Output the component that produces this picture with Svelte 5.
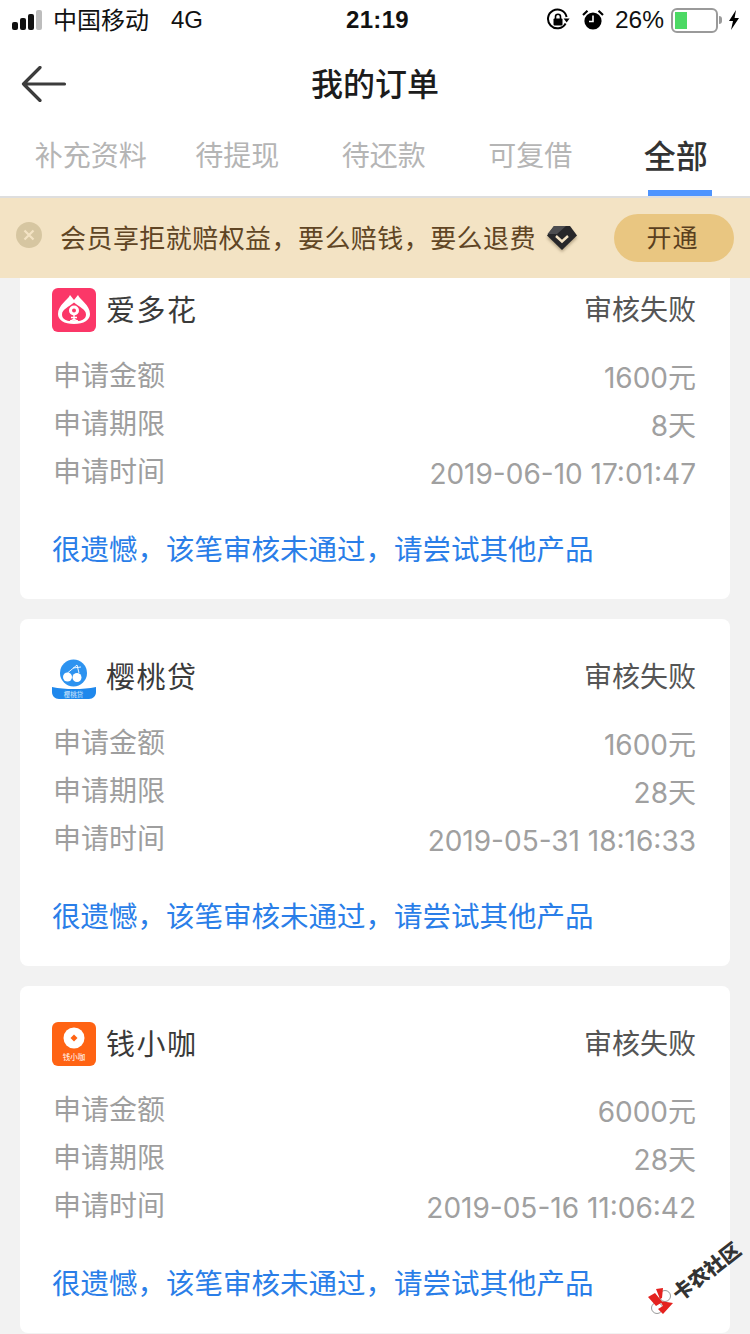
<script>
  const tabs = ['补充资料', '待提现', '待还款', '可复借', '全部'];
  const orders = [
    { name: '爱多花', logo: 'flower', amount: '1600元', term: '8天', time: '2019-06-10 17:01:47' },
    { name: '樱桃贷', logo: 'cherry', amount: '1600元', term: '28天', time: '2019-05-31 18:16:33' },
    { name: '钱小咖', logo: 'coin', amount: '6000元', term: '28天', time: '2019-05-16 11:06:42' }
  ];
</script>

<div class="page">
  <header class="status">
    <div class="s-left">
      <span class="signal"><i class="b1"></i><i class="b2"></i><i class="b3"></i><i class="b4"></i></span>
      <span class="carrier">中国移动</span>
      <span class="net">4G</span>
    </div>
    <div class="clock">21:19</div>
    <div class="s-right">
      <svg width="24" height="24" viewBox="0 0 24 24" class="lock">
        <path d="M19.6 15.5A9.4 9.4 0 1 1 20.6 9" fill="none" stroke="#000" stroke-width="2"/>
        <path d="M23.6 10.5h-6l3 4z" fill="#000"/>
        <rect x="7.5" y="10.5" width="9" height="7" rx="1" fill="#000"/>
        <path d="M9.5 11V8.8a2.5 2.5 0 0 1 5 0V11" fill="none" stroke="#000" stroke-width="1.6"/>
      </svg>
      <svg width="22" height="22" viewBox="0 0 22 22" class="alarm">
        <circle cx="11" cy="12" r="8.6" fill="#000"/>
        <path d="M11 6.500V12.500H7" fill="none" stroke="#fff" stroke-width="1.600"/>
        <path d="M1 6 5.500 1.800M21 6 16.500 1.800" stroke="#000" stroke-width="2.200" fill="none"/>
      </svg>
      <span class="pct">26%</span>
      <span class="battery"><span class="level"></span></span>
      <span class="nub"></span>
      <svg width="12" height="20" viewBox="0 0 12 20" class="bolt"><path d="M8 0 1 11h4l-2 9 8-12H6.600z" fill="#000"/></svg>
    </div>
  </header>

  <nav class="title-bar">
    <svg class="back" width="46" height="36" viewBox="0 0 46 36">
      <path d="M43.500 18H2.500M19 1.500 2.500 18 19 34.500" fill="none" stroke="#3c3c3c" stroke-width="3.200" stroke-linecap="round" stroke-linejoin="round"/>
    </svg>
    <h1>我的订单</h1>
  </nav>

  <div class="tabs">
    {#each tabs as tab, i}
      <div class="tab" class:active={i === tabs.length - 1}>{tab}</div>
    {/each}
  </div>

  <div class="banner">
    <span class="close">
      <svg width="14" height="14" viewBox="0 0 14 14"><path d="M2.500 2.500 11.500 11.500M11.500 2.500 2.500 11.500" stroke="#f3e3c4" stroke-width="2.200"/></svg>
    </span>
    <span class="b-text">会员享拒就赔权益，要么赔钱，要么退费</span>
    <svg class="gem" width="34" height="32" viewBox="0 0 34 32">
      <defs>
        <filter id="gs" x="-30%" y="-30%" width="160%" height="160%"><feGaussianBlur stdDeviation="1.500"/></filter>
      </defs>
      <path d="M9 6h16l7 9-15 14L2 15z" fill="#8b7a5c" opacity=".6" filter="url(#gs)"/>
      <path d="M9 3h16l7 9.500L17 27 2 12.500z" fill="#27272a"/>
      <path d="M9 3h12l-9 8H2.500z" fill="#4d4d50"/>
      <path d="M11 13l6 5.500 6-5.500" fill="none" stroke="#f4e3c4" stroke-width="2.400"/>
    </svg>
    <span class="open">开通</span>
  </div>

  <main class="list">
    <div class="scroller">
      {#each orders as o}
        <section class="card">
          <div class="head">
            <span class="logo">
              {#if o.logo === 'flower'}
                <svg width="44" height="44" viewBox="0 0 44 44">
                  <rect width="44" height="44" rx="6" fill="#fb3768"/>
                  <path d="M18 7C16 12 6 17 6 26c0 6 6 10 16 10s16-4 16-10c0-9-10-14-12-19l-4 5z" fill="#fff"/>
                  <path d="M22 14.500C17 19 10 21 10 26.500c0 4 3.500 6 7 6.500h10c3.500-.5 7-2.500 7-6.500C34 21 27 19 22 14.500z" fill="#fb3768"/>
                  <circle cx="22" cy="22.500" r="5" fill="#fff"/>
                  <circle cx="22" cy="22.500" r="2" fill="#fb3768"/>
                  <path d="M22 27v6M19 29.500h6M18 33c2 0 3-1 4-2 1 1 2 2 4 2" stroke="#fff" stroke-width="1.300" fill="none"/>
                </svg>
              {:else if o.logo === 'cherry'}
                <svg width="44" height="44" viewBox="0 0 44 44">
                  <circle cx="21.500" cy="18" r="13.500" fill="#2d93f0"/>
                  <path d="M0 32c7 1.500 14 2 22 2s15-.5 22-2v5c0 4-3 7-7 7H7c-4 0-7-3-7-7z" fill="#1f88ec"/>
                  <circle cx="15.500" cy="22" r="4.500" fill="#fff"/>
                  <circle cx="25" cy="22.500" r="4.500" fill="#fff"/>
                  <path d="M15.500 18 25 10l2 8M21 13l8-1" fill="none" stroke="#fff" stroke-width=".9"/>
                  <text x="21.500" y="41.500" class="mini pale">樱桃贷</text>
                </svg>
              {:else}
                <svg width="44" height="44" viewBox="0 0 44 44">
                  <rect width="44" height="44" rx="6" fill="#ff6313"/>
                  <circle cx="22" cy="16" r="10.500" fill="#fff"/>
                  <path d="M22 12.500l3.500 3.500-3.500 3.500-3.500-3.500z" fill="#ff6313"/>
                  <text x="22" y="38" class="mini">钱小咖</text>
                </svg>
              {/if}
            </span>
            <span class="name">{o.name}</span>
            <span class="state">审核失败</span>
          </div>
          <div class="row"><span>申请金额</span><span class="val">{o.amount}</span></div>
          <div class="row"><span>申请期限</span><span class="val">{o.term}</span></div>
          <div class="row"><span>申请时间</span><span class="val">{o.time}</span></div>
          <p class="note">很遗憾，该笔审核未通过，请尝试其他产品</p>
        </section>
      {/each}
    </div>
    <svg class="wm-icon" width="30" height="30" viewBox="0 0 30 30">
      <circle cx="17" cy="8" r="5.500" fill="#fff" stroke="#555" stroke-width=".6"/>
      <circle cx="9" cy="20" r="5.500" fill="#fff" stroke="#555" stroke-width=".6"/>
      <path d="M7 5 14.500 14 8 18 0 9zM8 1 15 0 14 10 12 11zM12 13 25 15 15 26 10 21 15 18z" fill="#e4221f"/>
    </svg>
    <span class="wm-text">卡农社区</span>
  </main>
</div>

<style>
  :global(body) { margin: 0; background: #f2f2f2; }
  .page {
    width: 750px;
    height: 1334px;
    overflow: hidden;
    display: flex;
    flex-direction: column;
    background: #f2f2f2;
    font-family: "Noto Sans CJK SC", "Liberation Sans", sans-serif;
    color: #333;
  }
  .status {
    height: 40px;
    flex: none;
    background: #fff;
    display: grid;
    grid-template-columns: 1fr auto 1fr;
    align-items: center;
    color: #111;
    font-size: 24px;
  }
  .s-left { display: flex; align-items: center; padding-left: 12px; }
  .signal { display: flex; align-items: flex-end; gap: 2px; width: 33px; height: 20px; }
  .signal i { display: block; width: 6px; background: #111; border-radius: 2px; }
  .b1 { height: 8px; } .b2 { height: 12px; } .b3 { height: 16px; }
  .signal .b4 { height: 20px; background: #bdbdbd; }
  .carrier { margin-left: 8px; line-height: 38px; height: 40px; }
  .net { margin-left: 22px; font-family: "Liberation Sans", sans-serif; }
  .clock { font: 700 24px "Liberation Sans", sans-serif; letter-spacing: .3px; padding-left: 5px; }
  .s-right { display: flex; align-items: center; justify-content: flex-end; padding-right: 10px; }
  .lock { margin-right: 12px; }
  .alarm { margin-right: 11px; }
  .pct { font: 24.500px "Liberation Sans", sans-serif; margin-right: 7px; }
  .battery {
    width: 39px; border: 2px solid #9a9a9a; border-radius: 6px;
    padding: 2px; display: flex; height: 17px;
  }
  .level { width: 12px; background: #4cd964; }
  .nub { width: 3px; height: 8px; background: #9a9a9a; border-radius: 0 3px 3px 0; margin: 0 6px 0 1px; }
  .title-bar {
    height: 88px; flex: none; background: #fff;
    position: relative; display: flex; align-items: center; justify-content: center;
  }
  .title-bar h1 { margin: 0 0 4px; font-size: 32px; font-weight: 500; color: #1c1c1c; line-height: 84px; }
  .back { position: absolute; left: 21px; top: 26px; }
  .tabs {
    height: 68px; flex: none; background: #fff;
    border-bottom: 2px solid #dedede;
    display: grid;
    grid-template-columns: repeat(5, 146.500px);
    padding-left: 17.500px;
  }
  .tab {
    text-align: center; font-size: 28px; color: #b5b5b5; line-height: 52px;
    position: relative;
  }
  .tab.active { color: #333; font-weight: 500; font-size: 32px; padding-right: 2px; }
  .tab.active::after {
    content: ""; position: absolute; left: 44.500px; bottom: 0; width: 64px; height: 6px; background: #4d94ff;
  }
  .banner {
    height: 80px; flex: none; background: #f3e3c4;
    display: flex; align-items: center; position: relative; z-index: 1;
    color: #604524;
  }
  .close {
    width: 26px; height: 26px; border-radius: 50%; background: #d6c6a1;
    display: flex; align-items: center; justify-content: center;
    margin: -7px 0 0 16px;
  }
  .b-text { font-size: 26px; margin: -4px 0 0 18px; width: 476px; white-space: nowrap; letter-spacing: .44px; }
  .gem { margin-left: 9px; margin-top: 2px; }
  .open {
    width: 120px; height: 48px; border-radius: 24px; background: #e9c681; box-sizing: border-box;
    padding-right: 3px;
    margin-left: 35px; text-align: center; line-height: 44px; font-size: 25px; color: #5a3f1e;
    letter-spacing: 1px;
  }
  .list { flex: 1; min-height: 0; overflow: hidden; position: relative; }
  .scroller { margin-top: -26px; display: flex; flex-direction: column; gap: 20px; padding: 0 20px; }
  .card {
    height: 347px; box-sizing: border-box; background: #fff; border-radius: 8px;
    padding: 32px 34px 0 32px; flex: none;
  }
  .head { display: flex; align-items: center; height: 48px; }
  .logo { width: 44px; height: 44px; display: block; flex: none; line-height: 0; margin-top: 4px; }
  .mini { font-size: 7.500px; fill: #fff; text-anchor: middle; }
  .mini.pale { font-size: 6.500px; fill: #d7eafc; }
  .name { font-size: 29px; margin-left: 10px; color: #3a3a3a; letter-spacing: 1.500px; }
  .state { margin-left: auto; font-size: 28px; color: #555; }
  .row {
    display: flex; justify-content: space-between; align-items: center;
    height: 48px; font-size: 28px; color: #9e9e9e; padding-left: 1px;
  }
  .head + .row { margin-top: 18px; }
  .val { font-family: "Inter", "Noto Sans CJK SC", sans-serif; font-size: 28px; line-height: 34px; color: #a0a0a0; padding-top: 8px; }
  .note { margin: 30px 0 0; font-size: 28.500px; line-height: 48px; color: #2a7ee8; white-space: nowrap; }
  .wm-icon { position: absolute; left: 648px; top: 1010px; }
  .wm-text {
    position: absolute; left: 666px; top: 983px;
    transform: rotate(-38deg);
    font-size: 20px; font-weight: 900; color: #333; line-height: 1;
    white-space: nowrap;
  }
</style>
